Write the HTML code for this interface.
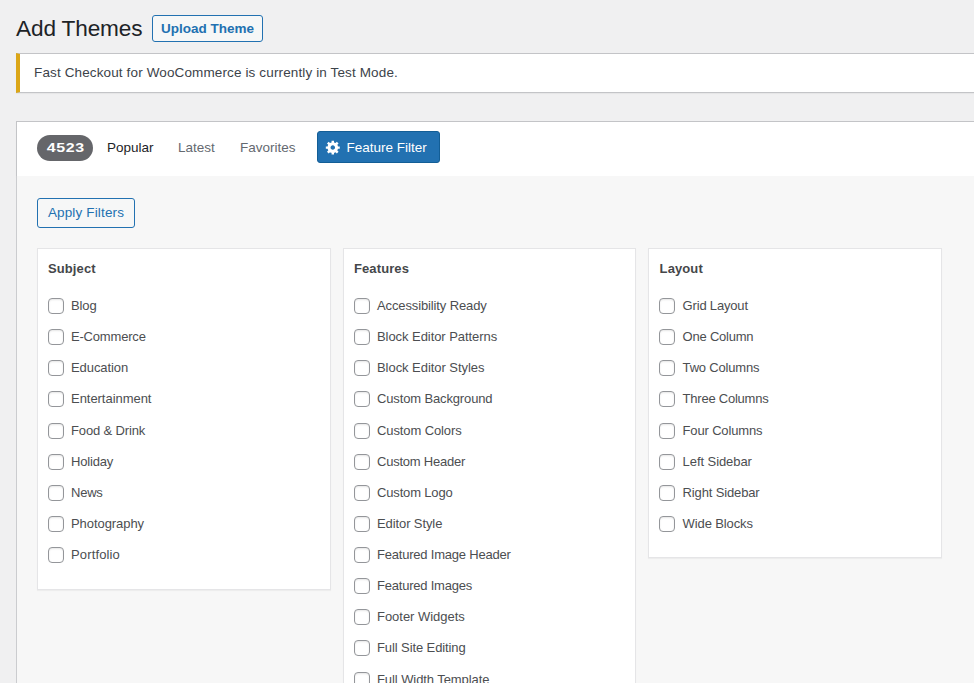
<!DOCTYPE html>
<html lang="en">
<head>
<meta charset="utf-8">
<title>Add Themes</title>
<style>
*{box-sizing:border-box}
html,body{margin:0;padding:0}
body{width:974px;height:683px;overflow:hidden;background:#f0f0f1;font-family:"Liberation Sans",sans-serif;font-size:13px;color:#3c434a;position:relative}
h1{position:absolute;left:16px;top:13.5px;margin:0;font-size:22.6px;font-weight:400;line-height:30px;color:#1d2327;white-space:nowrap;letter-spacing:-.13px}
.upload{position:absolute;left:152px;top:15px;width:111px;height:27px;border:1px solid #2271b1;border-radius:3px;background:#f6f7f7;color:#2271b1;font-weight:700;font-size:13.5px;line-height:26px;text-align:center;white-space:nowrap}
.notice{position:absolute;left:16px;top:53px;width:980px;height:40px;background:#fff;border:1px solid #c3c4c7;border-left:4px solid #dba617;box-shadow:0 1px 1px rgba(0,0,0,.04);}
.notice p{margin:0;position:absolute;left:14px;top:0;line-height:38px;font-size:13.5px;letter-spacing:.13px;white-space:nowrap;color:#3c434a}
.bar{position:absolute;left:16px;top:121px;width:980px;height:56px;background:#fff;border:1px solid #c3c4c7;border-bottom:none;box-shadow:0 1px 1px rgba(0,0,0,.04)}
.count{position:absolute;left:37px;top:135px;width:56px;height:26px;border-radius:13px;background:#65666a;color:#fff;font-weight:700;font-size:13.3px;line-height:26px;text-align:center}
.count b{display:inline-block;transform:scaleX(1.2);letter-spacing:.5px;margin-left:1px}
.tab{position:absolute;top:139px;font-size:13.5px;line-height:18px;color:#646970;white-space:nowrap}
.tab.cur{color:#1d2327}
.ff{position:absolute;left:317px;top:131px;width:123px;height:32px;border-radius:3px;background:#2271b1;border:1px solid #135e96;color:#fff;font-size:13.5px;line-height:30px;white-space:nowrap}
.ff svg{position:absolute;left:7.3px;top:6.5px}
.ff span{position:absolute;left:28.4px;top:1px}
.drawer{position:absolute;left:16px;top:176px;width:980px;height:520px;background:#f7f7f7;border-left:1px solid #cbcccf}
.apply{position:absolute;left:37px;top:198px;width:98px;height:30px;border:1px solid #2271b1;border-radius:3px;background:#f6f7f7;color:#2271b1;font-size:13.5px;line-height:28px;text-align:center;white-space:nowrap;letter-spacing:.15px}
.grp{position:absolute;top:248px;background:#fff;border:1px solid #e5e5e7;box-shadow:0 1px 1px rgba(0,0,0,.04)}
.grp h2{position:absolute;left:10px;top:11px;margin:0;font-size:13px;letter-spacing:.1px;font-weight:700;line-height:18px;color:#45474a}
.it{position:absolute;left:10px;height:16px;white-space:nowrap;margin-top:1px}
.it i{position:absolute;left:0;top:0;width:16px;height:16px;border:1px solid #94969a;border-radius:4px;background:#fff;box-shadow:inset 0 1px 2px rgba(0,0,0,.1)}
.it span{position:absolute;left:23px;top:0;font-size:13px;line-height:16px;color:#4c4e51}
</style>
</head>
<body>
<h1>Add Themes</h1>
<div class="upload">Upload Theme</div>
<div class="notice"><p>Fast Checkout for WooCommerce is currently in Test Mode.</p></div>
<div class="bar"></div>
<div class="drawer"></div>
<div class="count"><b>4523</b></div>
<div class="tab cur" style="left:107px">Popular</div>
<div class="tab" style="left:178px">Latest</div>
<div class="tab" style="left:240px">Favorites</div>
<div class="ff"><svg width="16.4" height="16.4" viewBox="0 0 20 20"><path fill="#fff" fill-rule="evenodd" d="M18 12h-2.18c-.17.7-.44 1.35-.81 1.93l1.54 1.54-2.1 2.1-1.54-1.54c-.58.36-1.23.63-1.91.79V19H8v-2.18c-.68-.16-1.33-.43-1.91-.79l-1.54 1.54-2.12-2.12 1.54-1.54c-.36-.58-.63-1.23-.79-1.91H1V9.03h2.17c.16-.7.44-1.35.8-1.94L2.43 5.55l2.1-2.1 1.54 1.54c.58-.37 1.24-.64 1.93-.81V2h3v2.18c.68.16 1.33.43 1.91.79l1.54-1.54 2.12 2.12-1.54 1.54c.36.59.64 1.24.8 1.94H18V12zM9.5 13.25c1.52 0 2.75-1.23 2.75-2.75S11.02 7.75 9.5 7.75 6.75 8.98 6.75 10.5s1.23 2.75 2.75 2.75z"/></svg><span>Feature Filter</span></div>
<div class="apply">Apply Filters</div>

<div class="grp" style="left:37px;width:294px;height:342px"><h2>Subject</h2>
<div class="it" style="top:48px"><i></i><span style="letter-spacing:-0.12px">Blog</span></div>
<div class="it" style="top:79.1px"><i></i><span style="letter-spacing:-0.19px">E-Commerce</span></div>
<div class="it" style="top:110.3px"><i></i><span style="letter-spacing:-0.08px">Education</span></div>
<div class="it" style="top:141.4px"><i></i><span style="letter-spacing:-0.04px">Entertainment</span></div>
<div class="it" style="top:172.5px"><i></i><span style="letter-spacing:-0.14px">Food &amp; Drink</span></div>
<div class="it" style="top:203.7px"><i></i><span style="letter-spacing:-0.18px">Holiday</span></div>
<div class="it" style="top:234.8px"><i></i><span style="letter-spacing:-0.24px">News</span></div>
<div class="it" style="top:265.9px"><i></i><span style="letter-spacing:-0.06px">Photography</span></div>
<div class="it" style="top:297px"><i></i><span style="letter-spacing:0.14px">Portfolio</span></div>
</div>

<div class="grp" style="left:343px;width:293px;height:461px"><h2>Features</h2>
<div class="it" style="top:48px"><i></i><span style="letter-spacing:-0.12px">Accessibility Ready</span></div>
<div class="it" style="top:79.1px"><i></i><span style="letter-spacing:-0.06px">Block Editor Patterns</span></div>
<div class="it" style="top:110.3px"><i></i><span style="letter-spacing:-0.05px">Block Editor Styles</span></div>
<div class="it" style="top:141.4px"><i></i><span style="letter-spacing:-0.14px">Custom Background</span></div>
<div class="it" style="top:172.5px"><i></i><span style="letter-spacing:-0.11px">Custom Colors</span></div>
<div class="it" style="top:203.7px"><i></i><span style="letter-spacing:-0.22px">Custom Header</span></div>
<div class="it" style="top:234.8px"><i></i><span style="letter-spacing:-0.16px">Custom Logo</span></div>
<div class="it" style="top:265.9px"><i></i><span style="letter-spacing:-0.1px">Editor Style</span></div>
<div class="it" style="top:297px"><i></i><span style="letter-spacing:-0.21px">Featured Image Header</span></div>
<div class="it" style="top:328.2px"><i></i><span style="letter-spacing:-0.22px">Featured Images</span></div>
<div class="it" style="top:359.3px"><i></i><span style="letter-spacing:-0.03px">Footer Widgets</span></div>
<div class="it" style="top:390.4px"><i></i><span style="letter-spacing:-0.1px">Full Site Editing</span></div>
<div class="it" style="top:421.6px"><i></i><span style="letter-spacing:-0.08px">Full Width Template</span></div>
</div>

<div class="grp" style="left:648px;width:294px;height:310px;padding-left:0"><h2 style="margin-left:.6px">Layout</h2>
<div class="it" style="top:48px"><i></i><span style="margin-left:.6px;letter-spacing:-0.18px">Grid Layout</span></div>
<div class="it" style="top:79.1px"><i></i><span style="margin-left:.6px;letter-spacing:-0.22px">One Column</span></div>
<div class="it" style="top:110.3px"><i></i><span style="margin-left:.6px;letter-spacing:-0.18px">Two Columns</span></div>
<div class="it" style="top:141.4px"><i></i><span style="margin-left:.6px;letter-spacing:-0.23px">Three Columns</span></div>
<div class="it" style="top:172.5px"><i></i><span style="margin-left:.6px;letter-spacing:-0.16px">Four Columns</span></div>
<div class="it" style="top:203.7px"><i></i><span style="margin-left:.6px;letter-spacing:-0.07px">Left Sidebar</span></div>
<div class="it" style="top:234.8px"><i></i><span style="margin-left:.6px;letter-spacing:-0.14px">Right Sidebar</span></div>
<div class="it" style="top:265.9px"><i></i><span style="margin-left:.6px;letter-spacing:-0.11px">Wide Blocks</span></div>
</div>
</body>
</html>
